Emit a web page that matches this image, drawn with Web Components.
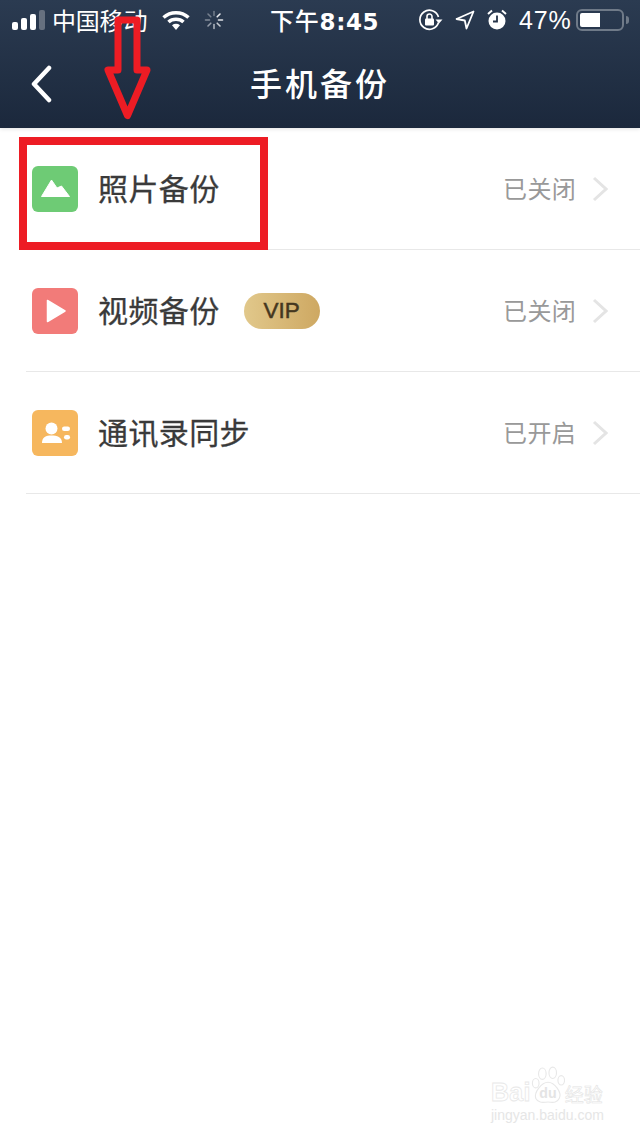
<!DOCTYPE html>
<html lang="zh">
<head>
<meta charset="utf-8">
<title>手机备份</title>
<style>
  html, body { margin: 0; padding: 0; background: #fff; }
  body { width: 640px; height: 1136px; position: relative; overflow: hidden; font-family: "Noto Sans CJK SC", sans-serif; }
</style>
</head>
<body>
<app-header title="手机备份"></app-header>
<backup-row label="照片备份" state="已关闭" kind="photo"></backup-row>
<backup-row label="视频备份" state="已关闭" kind="video"><vip-badge></vip-badge></backup-row>
<backup-row label="通讯录同步" state="已开启" kind="contacts"></backup-row>
<red-markup></red-markup>
<baidu-mark></baidu-mark>

<script>
class AppHeader extends HTMLElement {
  constructor() {
    super();
    this.shadowDOM = this.attachShadow({mode: 'open'});
  }

  connectedCallback() {
    this.shadowDOM.innerHTML = `
      <style>
        :host {
          display: block;
          height: 128px;
          background: linear-gradient(#2b3b51, #1b283c);
          box-shadow: 0 1px 4px rgba(0, 0, 0, 0.12);
          color: #fff;
          font-family: "Noto Sans CJK SC", sans-serif;
        }
        .status { display: flex; align-items: center; height: 40px; }
        .signal { display: flex; align-items: flex-end; gap: 3px; margin-left: 12px; height: 20px; }
        .signal i { display: block; width: 6px; border-radius: 2px; background: #fff; }
        .carrier { font-size: 24px; margin-left: 7px; width: 100px; white-space: nowrap; letter-spacing: -0.2px; padding-bottom: 2px; }
        .wifi { margin-left: 10px; display: block; }
        .spin { margin-left: 14px; display: block; }
        .time { font-size: 24px; font-weight: 500; margin-left: 46px; width: 156px; white-space: nowrap; letter-spacing: 0.8px; padding-bottom: 2px; }
        .time b { font-family: "DejaVu Sans", sans-serif; font-weight: 700; font-size: 23px; letter-spacing: 0.6px; }
        .icn { display: block; }
        .pct { font-family: "Liberation Sans", sans-serif; font-size: 25px; margin-left: 12px; letter-spacing: 0.8px; width: 57px; white-space: nowrap; padding-top: 1px; }
        .battery { width: 48px; height: 22px; box-sizing: border-box; border: 2px solid #6f7a88; border-radius: 6px; padding: 2px; }
        .battery i { display: block; width: 20px; height: 14px; background: #fff; border-radius: 2px 0 0 2px; }
        .nub { width: 3px; height: 8px; background: #6f7a88; border-radius: 0 3px 3px 0; margin-left: 2px; }
        .nav { display: flex; align-items: center; height: 88px; }
        .back { display: block; margin-left: 30px; }
        h1 { margin: 0 0 0 -54px; padding-bottom: 4px; font-size: 32px; font-weight: 500; letter-spacing: 3px; flex: 1; text-align: center; }
      </style>
      <div class="status">
        <div class="signal">
          <i style="height:8px"></i><i style="height:12px"></i><i style="height:16px"></i><i style="height:20px;background:#66707f"></i>
        </div>
        <span class="carrier">中国移动</span>
        <svg class="wifi" width="28" height="20" viewBox="0 0 28 20">
          <path d="M1.500 7.500C8.500 1 19.500 1 26.500 7.500" fill="none" stroke="#fff" stroke-width="3.500"/>
          <path d="M6.500 12C10.500 8.300 17.500 8.300 21.500 12" fill="none" stroke="#fff" stroke-width="3.500"/>
          <path d="M10 15.200C12.500 13.300 15.500 13.300 18 15.200L14 20Z" fill="#fff"/>
        </svg>
        <svg class="spin" width="20" height="20" viewBox="0 0 20 20" stroke-width="1.600" stroke-linecap="round">
          <path d="M10 1.500V5.500" stroke="#6f7a88"/><path d="M16 4L13.200 6.800" stroke="#e8eaee"/><path d="M18.500 10H14.500" stroke="#dfe2e6"/>
          <path d="M16 16L13.200 13.200" stroke="#c4c9d0"/><path d="M10 18.500V14.500" stroke="#aab1bb"/><path d="M4 16L6.800 13.200" stroke="#959daa"/>
          <path d="M1.500 10H5.500" stroke="#828c99"/><path d="M4 4L6.800 6.800" stroke="#757f8d"/>
        </svg>
        <span class="time">下午<b>8:45</b></span>
        <svg class="icn" width="24" height="22" viewBox="0 0 24 22" style="margin-left:-7px">
          <path d="M19.500 13.500A9.500 9.500 0 1 1 19.500 8" fill="none" stroke="#fff" stroke-width="1.700"/>
          <path d="M16.500 10.500H23.500L20 14.500Z" fill="#fff"/>
          <rect x="6" y="9.500" width="9" height="7" rx="1" fill="#fff"/>
          <path d="M8 10V7.500A2.500 2.500 0 0 1 13 7.500V10" fill="none" stroke="#fff" stroke-width="1.600"/>
        </svg>
        <svg class="icn" width="20" height="20" viewBox="0 0 20 20" style="margin-left:12px">
          <path d="M18.500 1.500L1.500 9L9.800 10.500L11.500 18.500Z" fill="none" stroke="#fff" stroke-width="1.800" stroke-linejoin="round"/>
        </svg>
        <svg class="icn" width="20" height="22" viewBox="0 0 20 22" style="margin-left:12px">
          <circle cx="10" cy="12" r="8.500" fill="#fff"/>
          <path d="M10 6.500V12.500H6" fill="none" stroke="#263449" stroke-width="1.800"/>
          <path d="M1 5L5 1.500M19 5L15 1.500" stroke="#fff" stroke-width="2"/>
        </svg>
        <span class="pct">47%</span>
        <div class="battery"><i></i></div>
        <div class="nub"></div>
      </div>
      <div class="nav">
        <svg class="back" width="24" height="38" viewBox="0 0 24 38">
          <path d="M19 3L4 19L19 35" fill="none" stroke="#fff" stroke-width="4.500" stroke-linecap="round" stroke-linejoin="round"/>
        </svg>
        <h1>${this.getAttribute('title')}</h1>
      </div>
    `;
  }
}
customElements.define('app-header', AppHeader);

const rowIcons = {
  photo: `<path d="M9.500 30.500L19.500 14L25 22L29.500 20L37.500 30.500Z" fill="#fff" stroke="#fff" stroke-linejoin="round"/>`,
  video: `<path d="M15.500 12.500V33.500L33 23Z" fill="#fff" stroke="#fff" stroke-width="1.500" stroke-linejoin="round"/>`,
  contacts: `<circle cx="19.500" cy="18.500" r="6" fill="#fff"/><path d="M10 33C10 27 14 25.500 19.500 25.500C25 25.500 30 27 30 33Z" fill="#fff"/><rect x="30" y="16.500" width="8" height="4.500" rx="2.200" fill="#fff"/><rect x="32" y="25" width="6" height="4.500" rx="2.200" fill="#fff"/>`
};
const rowColors = { photo: '#6ecb75', video: '#f27b79', contacts: '#f6b75e' };

class BackupRow extends HTMLElement {
  constructor() {
    super();
    this.shadowDOM = this.attachShadow({mode: 'open'});
  }

  connectedCallback() {
    const kind = this.getAttribute('kind');
    this.shadowDOM.innerHTML = `
      <style>
        :host {
          display: block;
          margin-left: 26px;
          font-family: "Noto Sans CJK SC", sans-serif;
        }
        .row {
          display: flex;
          align-items: center;
          height: 121px;
          padding: 0 32px 0 6px;
          border-bottom: 1px solid #e8e8e8;
        }
        .icon { display: block; border-radius: 6px; flex: none; }
        .label { font-size: 30px; color: #3a3a3a; -webkit-text-stroke: 0.3px #3a3a3a; margin-left: 20px; padding-bottom: 4px; letter-spacing: 0.4px; white-space: nowrap; }
        .state { font-size: 24px; color: #999; margin-left: auto; padding-bottom: 3px; letter-spacing: 0.3px; white-space: nowrap; }
        .arrow { display: block; margin-left: 16px; }
      </style>
      <div class="row">
        <svg class="icon" width="46" height="46" viewBox="0 0 46 46" style="background:${rowColors[kind]}">${rowIcons[kind]}</svg>
        <span class="label">${this.getAttribute('label')}</span>
        <slot></slot>
        <span class="state">${this.getAttribute('state')}</span>
        <svg class="arrow" width="16" height="26" viewBox="0 0 16 26">
          <path d="M2 2L14 13L2 24" fill="none" stroke="#e4e4e4" stroke-width="3"/>
        </svg>
      </div>
    `;
  }
}
customElements.define('backup-row', BackupRow);

class VipBadge extends HTMLElement {
  constructor() {
    super();
    this.shadowDOM = this.attachShadow({mode: 'open'});
  }

  connectedCallback() {
    this.shadowDOM.innerHTML = `
      <style>
        :host {
          display: flex;
          align-items: center;
          justify-content: center;
          width: 76px;
          height: 36px;
          margin-left: 24px;
          border-radius: 18px;
          background: linear-gradient(90deg, #e1c88b, #cea862);
          color: #45371f;
          -webkit-text-stroke: 0.5px #45371f;
          font: 400 22.500px "Liberation Sans", sans-serif;
        }
      </style>
      VIP
    `;
  }
}
customElements.define('vip-badge', VipBadge);

// the hand drawn annotation on top of the screenshot
class RedMarkup extends HTMLElement {
  constructor() {
    super();
    this.shadowDOM = this.attachShadow({mode: 'open'});
  }

  connectedCallback() {
    this.shadowDOM.innerHTML = `
      <style>
        :host { display: block; position: absolute; left: 0; top: 0; width: 640px; height: 260px; pointer-events: none; }
        .box { position: absolute; left: 19px; top: 137px; width: 249px; height: 113px; box-sizing: border-box; border: 8px solid #ed1c24; }
        svg { position: absolute; left: 100px; top: 10px; }
      </style>
      <div class="box"></div>
      <svg width="56" height="114" viewBox="0 0 56 114">
        <path d="M18 10H37V60H47L27.500 105.500L8 60H18Z" fill="none" stroke="#ed1c24" stroke-width="7" stroke-linejoin="round"/>
      </svg>
    `;
  }
}
customElements.define('red-markup', RedMarkup);

class BaiduMark extends HTMLElement {
  constructor() {
    super();
    this.shadowDOM = this.attachShadow({mode: 'open'});
  }

  connectedCallback() {
    this.shadowDOM.innerHTML = `
      <style>
        :host { display: block; position: absolute; left: 491px; top: 1066px; width: 130px; height: 60px; }
        .top { display: flex; align-items: flex-end; height: 40px; }
        .bai { font: 700 25px/26px "Liberation Sans", sans-serif; letter-spacing: 0.3px; -webkit-text-stroke: 0.8px #e8e8e8; color: #fff; margin-bottom: 1px; }
        .paw { display: block; flex: none; }
        .jy { font: 400 19px/22px "Noto Sans CJK SC", sans-serif; -webkit-text-stroke: 0.6px #e4e4e4; color: #fff; margin-bottom: 1px; white-space: nowrap; }
        .url { font: 400 14px/16px "Liberation Sans", sans-serif; color: #e6e6e6; white-space: nowrap; margin-top: 1px; }
      </style>
      <div class="top">
        <span class="bai">Bai</span>
        <svg class="paw" width="34" height="40" viewBox="0 0 36 40">
          <g fill="#fff" stroke="#e8e8e8" stroke-width="1.200">
            <ellipse cx="12" cy="7" rx="4" ry="6"/>
            <ellipse cx="23" cy="6" rx="4" ry="6"/>
            <ellipse cx="32" cy="14" rx="3.500" ry="5"/>
            <ellipse cx="5" cy="17" rx="3.500" ry="5"/>
            <path d="M18 16C25 16 33 27 30 33C27 39 22 37 18 37C14 37 8 39 5 33C3 27 11 16 18 16Z"/>
          </g>
          <text x="18" y="33" text-anchor="middle" font-family="Liberation Sans" font-weight="700" font-size="15" fill="#e4e4e4">du</text>
        </svg>
        <span class="jy">经验</span>
      </div>
      <div class="url">jingyan.baidu.com</div>
    `;
  }
}
customElements.define('baidu-mark', BaiduMark);
</script>
</body>
</html>
